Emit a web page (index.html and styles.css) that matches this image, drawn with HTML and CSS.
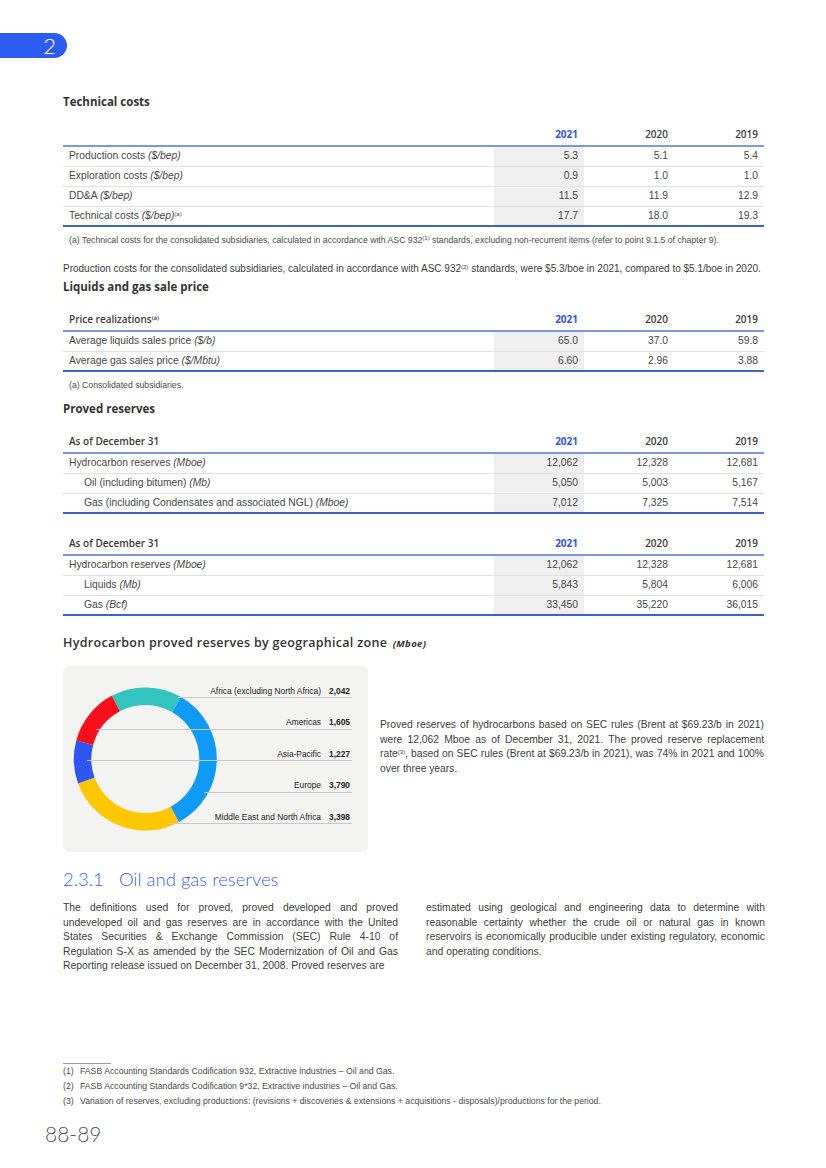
FILE: index.html
```html
<!DOCTYPE html>
<html lang="en">
<head>
<meta charset="utf-8">
<title>Oil and gas reserves</title>
<link rel="stylesheet" href="styles.css">
</head>
<body>
<div class="page">
  <div class="badge">2</div>
  <div class="content">
    <h3 class="h-sub h-first">Technical costs</h3>
    <table class="data t1">
      <colgroup><col><col class="cw"><col class="cw"><col class="cw"></colgroup>
      <thead>
        <tr><th class="lbl"></th><th class="y21">2021</th><th>2020</th><th>2019</th></tr>
      </thead>
      <tbody>
        <tr><td class="lbl">Production costs <i>($/bep)</i></td><td class="c21">5.3</td><td>5.1</td><td>5.4</td></tr>
        <tr><td class="lbl">Exploration costs <i>($/bep)</i></td><td class="c21">0.9</td><td>1.0</td><td>1.0</td></tr>
        <tr><td class="lbl">DD&amp;A <i>($/bep)</i></td><td class="c21">11.5</td><td>11.9</td><td>12.9</td></tr>
        <tr><td class="lbl">Technical costs <i>($/bep)</i><sup>(a)</sup></td><td class="c21">17.7</td><td>18.0</td><td>19.3</td></tr>
      </tbody>
    </table>
    <p class="tnote">(a) Technical costs for the consolidated subsidiaries, calculated in accordance with ASC 932<sup>(1)</sup> standards, excluding non-recurrent items (refer to point 9.1.5 of chapter 9).</p>
    <p class="para-one">Production costs for the consolidated subsidiaries, calculated in accordance with ASC 932<sup>(2)</sup> standards, were $5.3/boe in 2021, compared to $5.1/boe in 2020.</p>
    <h3 class="h-sub h-tight">Liquids and gas sale price</h3>
    <table class="data t2">
      <colgroup><col><col class="cw"><col class="cw"><col class="cw"></colgroup>
      <thead>
        <tr><th class="lbl">Price realizations<sup>(a)</sup></th><th class="y21">2021</th><th>2020</th><th>2019</th></tr>
      </thead>
      <tbody>
        <tr><td class="lbl">Average liquids sales price <i>($/b)</i></td><td class="c21">65.0</td><td>37.0</td><td>59.8</td></tr>
        <tr><td class="lbl">Average gas sales price <i>($/Mbtu)</i></td><td class="c21">6.60</td><td>2.96</td><td>3.88</td></tr>
      </tbody>
    </table>
    <p class="tnote">(a) Consolidated subsidiaries.</p>
    <h3 class="h-sub h-after-note">Proved reserves</h3>
    <table class="data t3">
      <colgroup><col><col class="cw"><col class="cw"><col class="cw"></colgroup>
      <thead>
        <tr><th class="lbl">As of December 31</th><th class="y21">2021</th><th>2020</th><th>2019</th></tr>
      </thead>
      <tbody>
        <tr><td class="lbl">Hydrocarbon reserves <i>(Mboe)</i></td><td class="c21">12,062</td><td>12,328</td><td>12,681</td></tr>
        <tr><td class="lbl sub">Oil (including bitumen) <i>(Mb)</i></td><td class="c21">5,050</td><td>5,003</td><td>5,167</td></tr>
        <tr><td class="lbl sub">Gas (including Condensates and associated NGL) <i>(Mboe)</i></td><td class="c21">7,012</td><td>7,325</td><td>7,514</td></tr>
      </tbody>
    </table>
    <table class="data t4">
      <colgroup><col><col class="cw"><col class="cw"><col class="cw"></colgroup>
      <thead>
        <tr><th class="lbl">As of December 31</th><th class="y21">2021</th><th>2020</th><th>2019</th></tr>
      </thead>
      <tbody>
        <tr><td class="lbl">Hydrocarbon reserves <i>(Mboe)</i></td><td class="c21">12,062</td><td>12,328</td><td>12,681</td></tr>
        <tr><td class="lbl sub">Liquids <i>(Mb)</i></td><td class="c21">5,843</td><td>5,804</td><td>6,006</td></tr>
        <tr><td class="lbl sub">Gas <i>(Bcf)</i></td><td class="c21">33,450</td><td>35,220</td><td>36,015</td></tr>
      </tbody>
    </table>

    <h3 class="h-chart">Hydrocarbon proved reserves by geographical zone <i class="unit">(Mboe)</i></h3>
    <div class="chart-row">
      <div class="panel">
        <svg class="donut" width="305" height="186" viewBox="0 0 305 186">
          <g fill="none" stroke-width="17.5">
            <path d="M52.84 37.60 A62.75 62.75 0 0 1 113.68 38.66" stroke="#33c4c0"/>
            <path d="M113.68 38.66 A62.75 62.75 0 0 1 111.76 148.40" stroke="#0f9bf5"/>
            <path d="M111.76 148.40 A62.75 62.75 0 0 1 23.33 114.46" stroke="#ffc700"/>
            <path d="M23.33 114.46 A62.75 62.75 0 0 1 21.69 76.76" stroke="#2f55f2"/>
            <path d="M21.69 76.76 A62.75 62.75 0 0 1 52.84 37.60" stroke="#f5101c"/>
          </g>
          <g stroke="#c9c9c9" stroke-width="1">
            <line x1="115" y1="31.5" x2="289" y2="31.5"/>
            <line x1="33" y1="63.5" x2="289" y2="63.5"/>
            <line x1="24" y1="94.5" x2="289" y2="94.5"/>
            <line x1="141" y1="126.5" x2="289" y2="126.5"/>
            <line x1="105" y1="157.5" x2="289" y2="157.5"/>
          </g>
          <g class="lab" text-anchor="end">
            <text x="258" y="27.5">Africa (excluding North Africa)</text>
            <text x="258" y="59">Americas</text>
            <text x="258" y="90.5">Asia-Pacific</text>
            <text x="258" y="122">Europe</text>
            <text x="258" y="153.5">Middle East and North Africa</text>
          </g>
          <g class="val" text-anchor="end">
            <text x="287" y="27.5">2,042</text>
            <text x="287" y="59">1,605</text>
            <text x="287" y="90.5">1,227</text>
            <text x="287" y="122">3,790</text>
            <text x="287" y="153.5">3,398</text>
          </g>
        </svg>
      </div>
      <p class="chart-text">Proved reserves of hydrocarbons based on SEC rules (Brent at $69.23/b in 2021) were 12,062 Mboe as of December 31, 2021. The proved reserve replacement rate<sup>(3)</sup>, based on SEC rules (Brent at $69.23/b in 2021), was 74% in 2021 and 100% over three years.</p>
    </div>

    <h2 class="section-title">2.3.1&nbsp;&nbsp; Oil and gas reserves</h2>
    <div class="cols">
      <p>The definitions used for proved, proved developed and proved undeveloped oil and gas reserves are in accordance with the United States Securities &amp; Exchange Commission (SEC) Rule 4-10 of Regulation S-X as amended by the SEC Modernization of Oil and Gas Reporting release issued on December 31, 2008. Proved reserves are</p>
      <p>estimated using geological and engineering data to determine with reasonable certainty whether the crude oil or natural gas in known reservoirs is economically producible under existing regulatory, economic and operating conditions.</p>
    </div>

    <div class="footnotes">
      <div class="rule"></div>
      <div class="fn"><span class="fn-n">(1)</span>FASB Accounting Standards Codification 932, Extractive industries – Oil and Gas.</div>
      <div class="fn"><span class="fn-n">(2)</span>FASB Accounting Standards Codification 9*32, Extractive industries – Oil and Gas.</div>
      <div class="fn"><span class="fn-n">(3)</span>Variation of reserves, excluding productions: (revisions + discoveries &amp; extensions + acquisitions - disposals)/productions for the period.</div>
    </div>
  </div>
  <div class="pagenum">88-89</div>
</div>
</body>
</html>
```

FILE: styles.css
```css
* { box-sizing: border-box; }
html, body { margin: 0; padding: 0; background: #ffffff; }
body {
  font-family: "Liberation Sans", Arial, sans-serif;
  color: #3d3d3d;
}
.page { width: 826px; height: 1168px; overflow: hidden; }

.badge {
  margin-top: 33px;
  width: 67px;
  height: 25px;
  background: #2e5cf3;
  border-radius: 0 13px 13px 0;
  color: #ffffff;
  font-family: Lato, "Open Sans", sans-serif;
  font-weight: 300;
  font-size: 22px;
  line-height: 25px;
  text-align: right;
  padding-right: 11px;
}

.content { padding: 0 62px 0 63px; }

.h-sub {
  margin: 0;
  font-family: "Open Sans", sans-serif;
  font-weight: 700;
  font-size: 11.5px;
  line-height: 16px;
  color: #333333;
}
.h-first { margin-top: 36px; }
.h-tight { margin-top: 3px; }
.h-after-note { margin-top: 11px; }

table.data {
  width: 701px;
  border-collapse: collapse;
  table-layout: fixed;
  margin-top: 14px;
  font-size: 10.3px;
  color: #474747;
}
table.data col.cw { width: 90px; }
table.data th {
  height: 22px;
  padding: 0 6px 4px 0;
  vertical-align: bottom;
  text-align: right;
  font-family: "Open Sans", sans-serif;
  font-weight: 600;
  font-size: 10px;
  line-height: 13px;
  color: #3a3a3a;
  border-bottom: 2px solid #7d97e8;
}
table.data th.lbl { text-align: left; padding-left: 6px; }
table.data th.y21 { color: #2f55e0; font-weight: 700; }
table.data td {
  height: 20px;
  padding: 0 6px 0 0;
  text-align: right;
  vertical-align: middle;
  border-bottom: 1px solid #e2e2e2;
  line-height: 12px;
}
table.data tbody tr:last-child td { border-bottom: 2px solid #3f60d0; }
table.data td.lbl { text-align: left; padding-left: 6px; }
table.data td.sub { padding-left: 21px; }
table.data td.c21 { background: #efeff0; }
sup {
  font-size: 6px;
  line-height: 1;
  vertical-align: 3px;
}
table.t4 { margin-top: 19px; }

.tnote {
  margin: 8px 0 0 0;
  padding-left: 6px;
  font-size: 8.7px;
  line-height: 10px;
  color: #4a4a4a;
}
.para-one {
  margin: 17px 0 0 0;
  font-size: 10px;
  line-height: 14px;
  color: #3d3d3d;
}

.h-chart {
  margin: 19px 0 0 0;
  font-family: "Open Sans", sans-serif;
  font-weight: 600;
  font-size: 12.5px;
  letter-spacing: 0.3px;
  line-height: 16px;
  color: #333333;
}
.h-chart .unit { font-size: 9.5px; font-weight: 700; font-style: italic; letter-spacing: 0.4px; margin-left: 2px; }

.chart-row {
  display: flex;
  gap: 12px;
  margin-top: 14px;
}
.panel {
  flex: none;
  width: 305px;
  height: 186px;
  background: #f3f3f2;
  border-radius: 6px;
}
.donut { display: block; }
.donut .lab { font-family: "Liberation Sans", Arial, sans-serif; font-size: 8.4px; fill: #222222; }
.donut .val { font-family: "Liberation Sans", Arial, sans-serif; font-size: 8.4px; font-weight: 700; fill: #222222; }

.chart-text {
  margin: 52px 0 0 0;
  width: 385px;
  font-size: 10.3px;
  line-height: 14.5px;
  text-align: justify;
  color: #3d3d3d;
}

.section-title {
  margin: 16px 0 0 0;
  font-family: Lato, "Open Sans", sans-serif;
  font-weight: 300;
  font-size: 18.5px;
  line-height: 22px;
  color: #3a5fe2;
}

.cols {
  display: grid;
  grid-template-columns: 335px 339px;
  column-gap: 28px;
  margin-top: 11px;
}
.cols p {
  margin: 0;
  font-size: 10.35px;
  line-height: 14.6px;
  text-align: justify;
  color: #3d3d3d;
}

.footnotes { margin-top: 89px; }
.rule { width: 48px; height: 1px; background: #9a9a9a; }
.fn {
  font-size: 8.7px;
  line-height: 15px;
  color: #4a4a4a;
  display: flex;
}
.fn-n { width: 17px; flex: none; }

.pagenum {
  margin: 13px 0 0 45px;
  font-family: Lato, "Open Sans", sans-serif;
  font-weight: 300;
  font-size: 21px;
  line-height: 24px;
  color: #555555;
}
```
